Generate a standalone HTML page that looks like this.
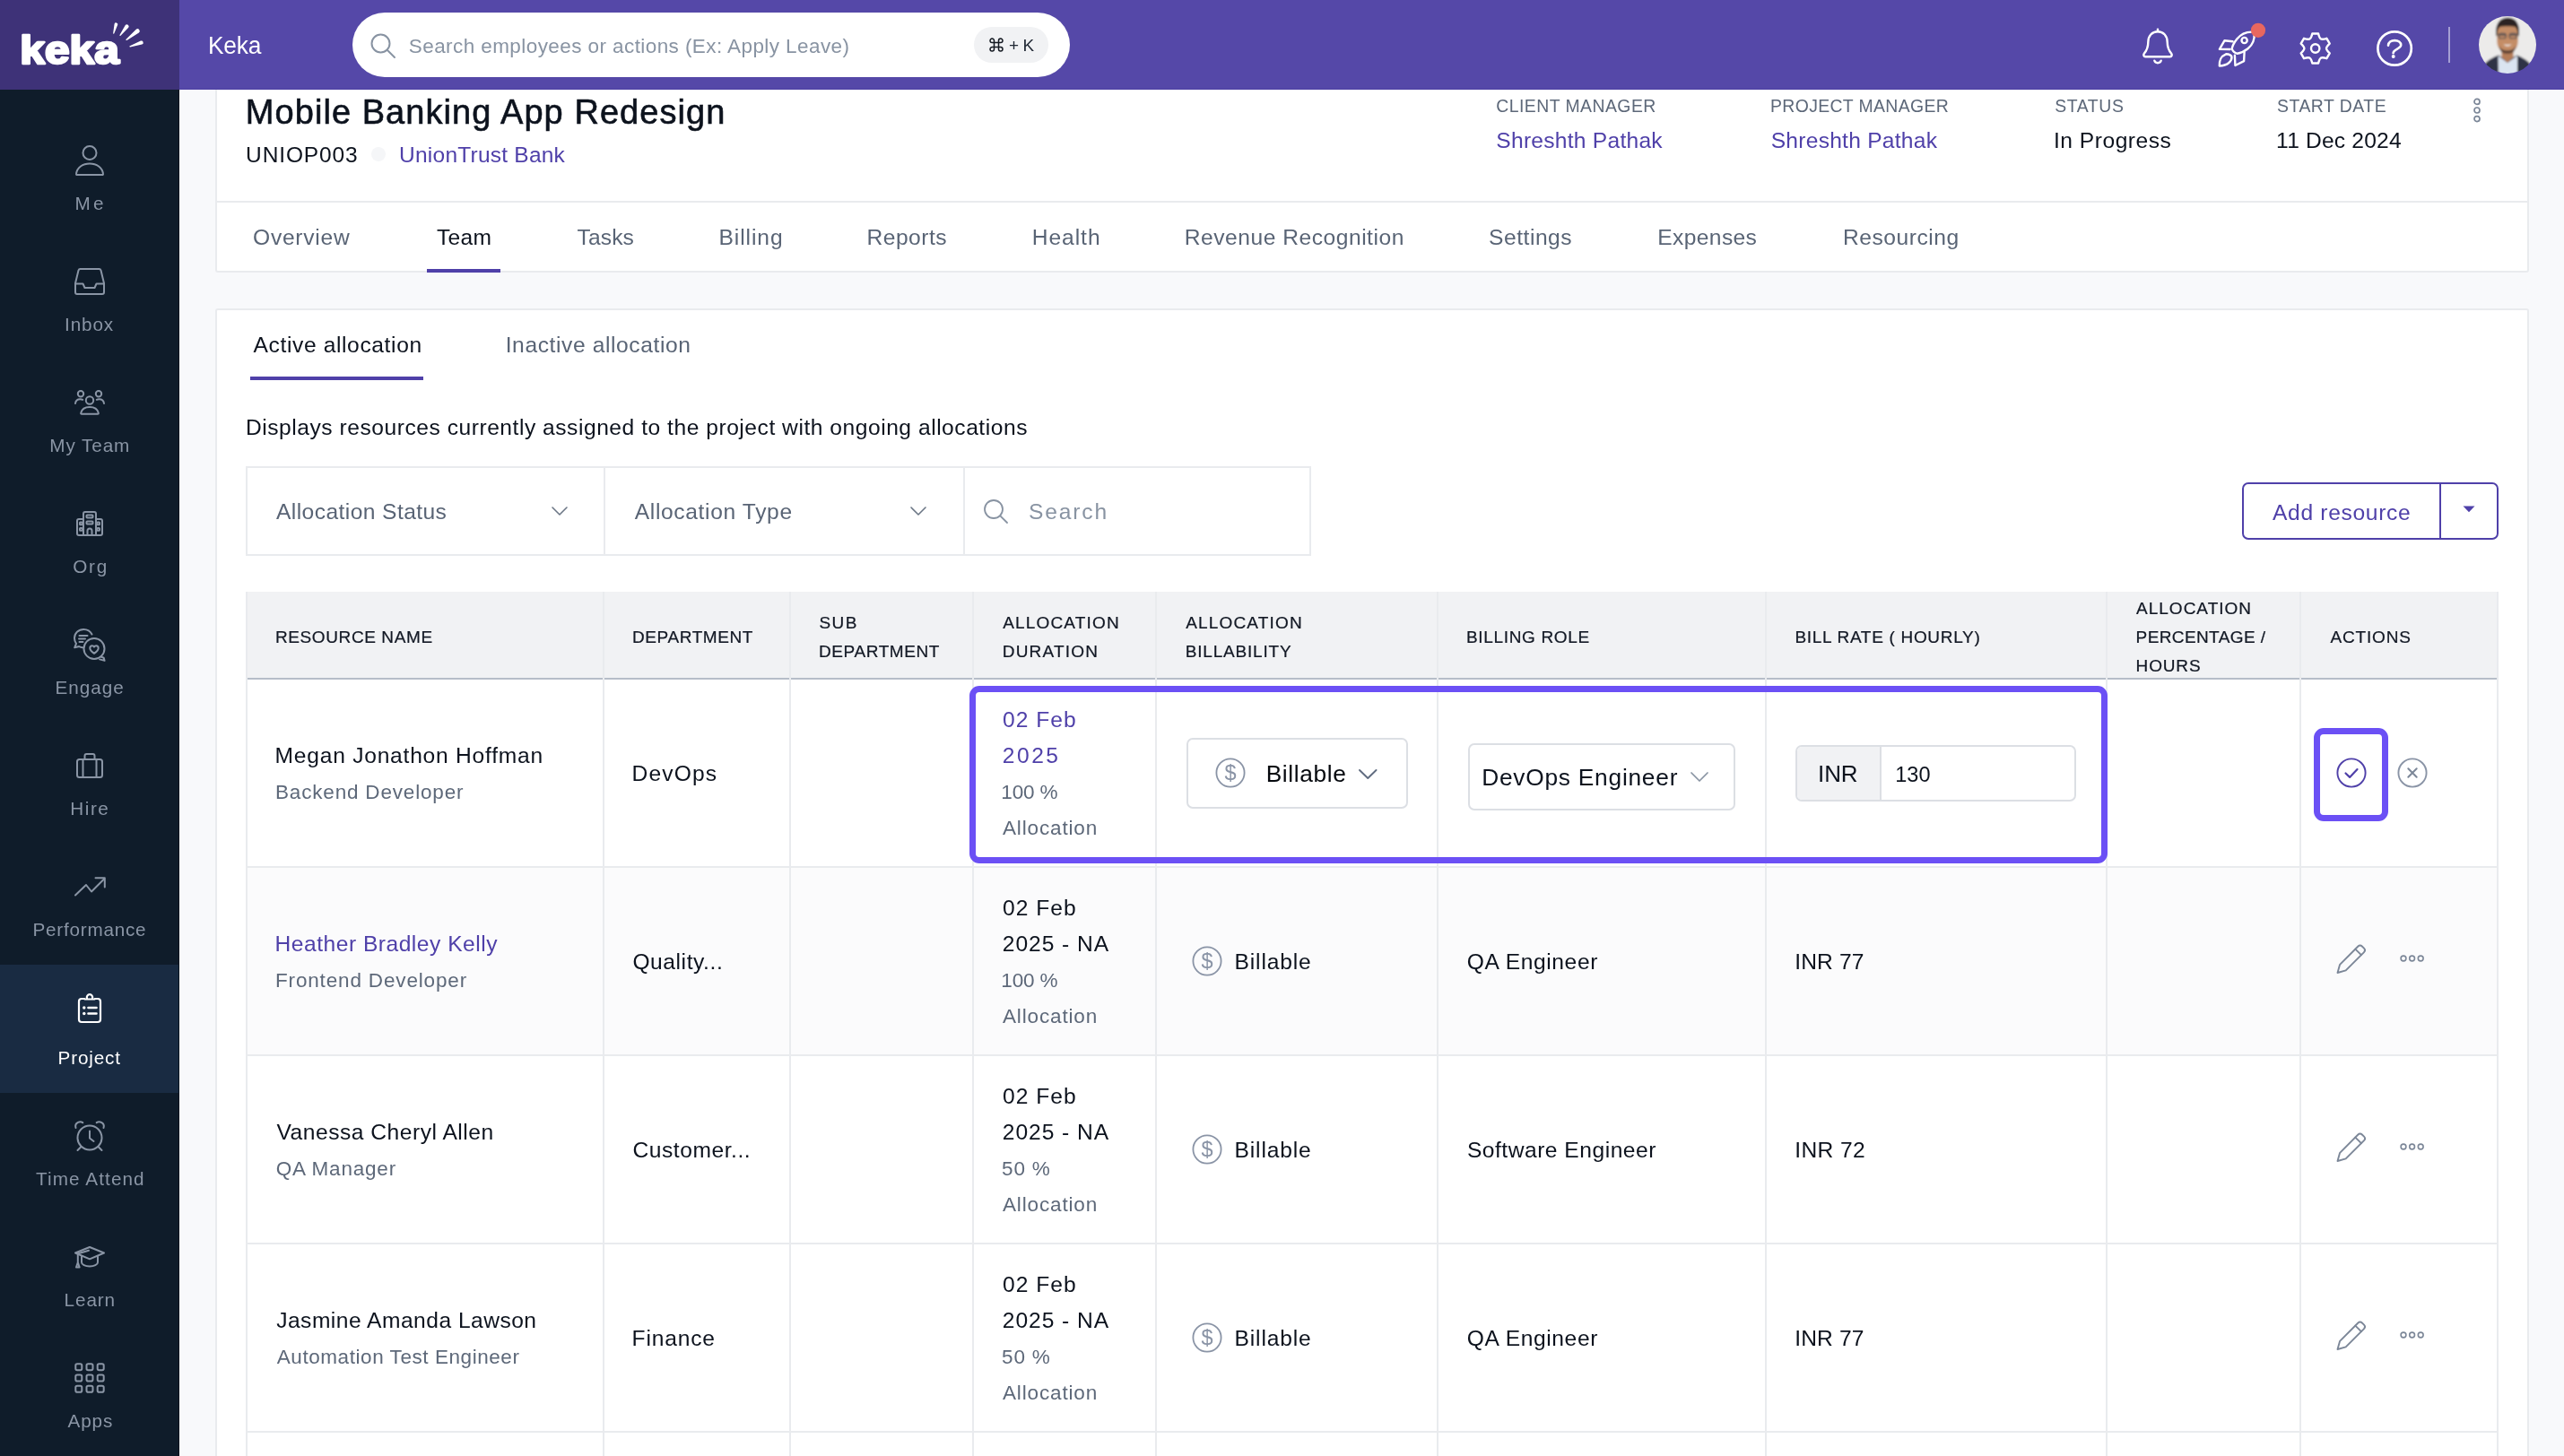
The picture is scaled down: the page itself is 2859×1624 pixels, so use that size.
<!DOCTYPE html>
<html lang="en">
<head>
<meta charset="utf-8">
<title>Keka - Mobile Banking App Redesign - Team</title>
<style>
html,body{margin:0;padding:0;width:2859px;height:1624px;overflow:hidden;font-family:"Liberation Sans",sans-serif;}
body{width:2859px;height:1624px;overflow:hidden;position:relative;background:#f8f9fb;
font-family:"Liberation Sans",sans-serif;}
.t{position:absolute;white-space:nowrap;line-height:1;}
.b{position:absolute;box-sizing:border-box;}
svg{overflow:visible;}
#app{position:absolute;left:0;top:0;width:2859px;height:1624px;overflow:hidden;will-change:transform;}
header,aside,main,section{position:absolute;left:0;top:0;width:0;height:0;}
</style>
</head>
<body>
<div id="app">
<main>
<div class="b" style="left:200px;top:100px;width:2659px;height:1px;background:#fff;"></div>
<div class="b" style="left:200px;top:100px;width:1px;height:1524px;background:#fff;"></div>
<div class="b" style="left:240px;top:60px;width:2580px;height:244px;background:#fff;border:2px solid #e9ebee;border-radius:3px;"></div>
<div class="b" style="left:242px;top:224px;width:2576px;height:2px;background:#e9ebee;"></div>
<div class="t" style="left:273.8px;top:106px;font-size:38px;color:#0c121d;letter-spacing:1.06px;-webkit-text-stroke:0.6px #0c121d;">Mobile Banking App Redesign</div>
<div class="t" style="left:274.1px;top:161px;font-size:24.5px;color:#0c121d;letter-spacing:0.88px;">UNIOP003</div>
<div class="b" style="left:414px;top:164px;width:16px;height:16px;background:#f5f6f8;border-radius:50%;"></div>
<div class="t" style="left:445.1px;top:161px;font-size:24.5px;color:#4f40a9;letter-spacing:0.23px;">UnionTrust Bank</div>
<div class="t" style="left:1668.2px;top:109px;font-size:19.4px;color:#5d6879;letter-spacing:0.47px;">CLIENT MANAGER</div>
<div class="t" style="left:1974.0px;top:109px;font-size:19.4px;color:#5d6879;letter-spacing:0.37px;">PROJECT MANAGER</div>
<div class="t" style="left:2291.3px;top:109px;font-size:19.4px;color:#5d6879;letter-spacing:0.58px;">STATUS</div>
<div class="t" style="left:2539.1px;top:109px;font-size:19.4px;color:#5d6879;letter-spacing:0.49px;">START DATE</div>
<div class="t" style="left:1668.3px;top:145px;font-size:24.6px;color:#4f40a9;letter-spacing:0.25px;">Shreshth Pathak</div>
<div class="t" style="left:1974.7px;top:145px;font-size:24.6px;color:#4f40a9;letter-spacing:0.25px;">Shreshth Pathak</div>
<div class="t" style="left:2289.9px;top:145px;font-size:24.6px;color:#0c121d;letter-spacing:0.52px;">In Progress</div>
<div class="t" style="left:2538.1px;top:145px;font-size:24.6px;color:#0c121d;letter-spacing:0.19px;">11 Dec 2024</div>
<svg class="b" style="left:2757px;top:109px;" width="10" height="28" viewBox="0 0 10 28" ><g fill="none" stroke="#7c8798" stroke-width="1.700"><circle cx="5" cy="4.4" r="3"/><circle cx="5" cy="14.0" r="3"/><circle cx="5" cy="23.6" r="3"/></g></svg>
<div class="t" style="left:282.0px;top:253px;font-size:24.6px;color:#596475;letter-spacing:0.75px;">Overview</div>
<div class="t" style="left:486.9px;top:253px;font-size:24.6px;color:#0c121d;letter-spacing:0.34px;">Team</div>
<div class="t" style="left:643.6px;top:253px;font-size:24.6px;color:#596475;letter-spacing:0.09px;">Tasks</div>
<div class="t" style="left:801.5px;top:253px;font-size:24.6px;color:#596475;letter-spacing:0.91px;">Billing</div>
<div class="t" style="left:966.6px;top:253px;font-size:24.6px;color:#596475;letter-spacing:0.46px;">Reports</div>
<div class="t" style="left:1150.7px;top:253px;font-size:24.6px;color:#596475;letter-spacing:0.96px;">Health</div>
<div class="t" style="left:1320.8px;top:253px;font-size:24.6px;color:#596475;letter-spacing:0.52px;">Revenue Recognition</div>
<div class="t" style="left:1660.1px;top:253px;font-size:24.6px;color:#596475;letter-spacing:0.52px;">Settings</div>
<div class="t" style="left:1848.3px;top:253px;font-size:24.6px;color:#596475;letter-spacing:0.37px;">Expenses</div>
<div class="t" style="left:2055.0px;top:253px;font-size:24.6px;color:#596475;letter-spacing:0.52px;">Resourcing</div>
<div class="b" style="left:475.7px;top:300.3px;width:82px;height:4px;background:#4f40a9;"></div>
<div class="b" style="left:240px;top:344px;width:2580px;height:1300px;background:#fff;border:2px solid #e9ebee;border-radius:3px;"></div>
<div class="t" style="left:282.5px;top:373px;font-size:24.6px;color:#0c121d;letter-spacing:0.62px;">Active allocation</div>
<div class="t" style="left:563.7px;top:373px;font-size:24.6px;color:#596475;letter-spacing:0.60px;">Inactive allocation</div>
<div class="b" style="left:279px;top:420px;width:193px;height:4px;background:#4f40a9;"></div>
<div class="t" style="left:274.0px;top:465px;font-size:24.6px;color:#0c121d;letter-spacing:0.53px;">Displays resources currently assigned to the project with ongoing allocations</div>
<div class="b" style="left:274px;top:520px;width:1188px;height:100px;background:#fff;border:2px solid #e9ebee;"></div>
<div class="b" style="left:673px;top:522px;width:2px;height:96px;background:#e9ebee;"></div>
<div class="b" style="left:1074px;top:522px;width:2px;height:96px;background:#e9ebee;"></div>
<div class="t" style="left:308.0px;top:559px;font-size:24.6px;color:#596475;letter-spacing:0.42px;">Allocation Status</div>
<svg class="b" style="left:613.5px;top:564.0px;" width="20" height="12" viewBox="0 0 20 12" ><path d="M2 2 L10.0 10 L18 2" fill="none" stroke="#6b7685" stroke-width="1.6" stroke-linecap="round" stroke-linejoin="round"/></svg>
<div class="t" style="left:707.8px;top:559px;font-size:24.6px;color:#596475;letter-spacing:0.64px;">Allocation Type</div>
<svg class="b" style="left:1013.5px;top:564.0px;" width="20" height="12" viewBox="0 0 20 12" ><path d="M2 2 L10.0 10 L18 2" fill="none" stroke="#6b7685" stroke-width="1.6" stroke-linecap="round" stroke-linejoin="round"/></svg>
<svg class="b" style="left:1096px;top:556px;" width="30" height="30" viewBox="0 0 30 30" ><circle cx="12" cy="12" r="10" fill="none" stroke="#8893a2" stroke-width="1.800"/><path d="M19.300 19.300 L27 27" stroke="#8893a2" stroke-width="1.800" stroke-linecap="round"/></svg>
<div class="t" style="left:1146.9px;top:559px;font-size:24.6px;color:#8893a2;letter-spacing:1.87px;">Search</div>
<div class="b" style="left:2499.5px;top:538px;width:286px;height:63.5px;background:#fff;border:2px solid #4f40a9;border-radius:7px;"></div>
<div class="b" style="left:2719.5px;top:540px;width:2px;height:60px;background:#4f40a9;"></div>
<div class="t" style="left:2534.0px;top:560px;font-size:24.6px;color:#4f40a9;letter-spacing:0.67px;">Add resource</div>
<svg class="b" style="left:2746px;top:564px;" width="14" height="8" viewBox="0 0 14 8" ><path d="M0.500 0.500 h13 l-6.500 6.800 z" fill="#4f40a9"/></svg>
<div class="b" style="left:274px;top:660px;width:2512px;height:96px;background:#f1f2f4;"></div>
<div class="b" style="left:274px;top:756px;width:2512px;height:2px;background:#b6bdc8;"></div>
<div class="b" style="left:274px;top:968px;width:2512px;height:208px;background:#fbfbfc;"></div>
<div class="b" style="left:274px;top:966px;width:2512px;height:2px;background:#e9ebee;"></div>
<div class="b" style="left:274px;top:1176px;width:2512px;height:2px;background:#e9ebee;"></div>
<div class="b" style="left:274px;top:1386px;width:2512px;height:2px;background:#e9ebee;"></div>
<div class="b" style="left:274px;top:1596px;width:2512px;height:2px;background:#e9ebee;"></div>
<div class="b" style="left:274px;top:660px;width:2px;height:964px;background:#e9ebee;"></div>
<div class="b" style="left:672px;top:660px;width:2px;height:964px;background:#e9ebee;"></div>
<div class="b" style="left:880px;top:660px;width:2px;height:964px;background:#e9ebee;"></div>
<div class="b" style="left:1084px;top:660px;width:2px;height:964px;background:#e9ebee;"></div>
<div class="b" style="left:1288px;top:660px;width:2px;height:964px;background:#e9ebee;"></div>
<div class="b" style="left:1602px;top:660px;width:2px;height:964px;background:#e9ebee;"></div>
<div class="b" style="left:1968px;top:660px;width:2px;height:964px;background:#e9ebee;"></div>
<div class="b" style="left:2348px;top:660px;width:2px;height:964px;background:#e9ebee;"></div>
<div class="b" style="left:2564px;top:660px;width:2px;height:964px;background:#e9ebee;"></div>
<div class="b" style="left:2784px;top:660px;width:2px;height:964px;background:#e9ebee;"></div>
<div class="t" style="left:307.0px;top:701px;font-size:19px;color:#121824;letter-spacing:0.60px;-webkit-text-stroke:0.220px #121824;">RESOURCE NAME</div>
<div class="t" style="left:705.0px;top:701px;font-size:19px;color:#121824;letter-spacing:0.59px;-webkit-text-stroke:0.220px #121824;">DEPARTMENT</div>
<div class="t" style="left:913.6px;top:685px;font-size:19px;color:#121824;letter-spacing:1.35px;-webkit-text-stroke:0.220px #121824;">SUB</div>
<div class="t" style="left:913.0px;top:717px;font-size:19px;color:#121824;letter-spacing:0.59px;-webkit-text-stroke:0.220px #121824;">DEPARTMENT</div>
<div class="t" style="left:1118.3px;top:685px;font-size:19px;color:#121824;letter-spacing:1.15px;-webkit-text-stroke:0.220px #121824;">ALLOCATION</div>
<div class="t" style="left:1117.8px;top:717px;font-size:19px;color:#121824;letter-spacing:1.18px;-webkit-text-stroke:0.220px #121824;">DURATION</div>
<div class="t" style="left:1322.3px;top:685px;font-size:19px;color:#121824;letter-spacing:1.15px;-webkit-text-stroke:0.220px #121824;">ALLOCATION</div>
<div class="t" style="left:1321.7px;top:717px;font-size:19px;color:#121824;letter-spacing:0.81px;-webkit-text-stroke:0.220px #121824;">BILLABILITY</div>
<div class="t" style="left:1634.9px;top:701px;font-size:19px;color:#121824;letter-spacing:0.68px;-webkit-text-stroke:0.220px #121824;">BILLING ROLE</div>
<div class="t" style="left:2001.4px;top:701px;font-size:19px;color:#121824;letter-spacing:0.69px;-webkit-text-stroke:0.220px #121824;">BILL RATE ( HOURLY)</div>
<div class="t" style="left:2382.0px;top:669px;font-size:19px;color:#121824;letter-spacing:1.01px;-webkit-text-stroke:0.220px #121824;">ALLOCATION</div>
<div class="t" style="left:2381.6px;top:701px;font-size:19px;color:#121824;letter-spacing:0.39px;-webkit-text-stroke:0.220px #121824;">PERCENTAGE /</div>
<div class="t" style="left:2381.6px;top:733px;font-size:19px;color:#121824;letter-spacing:0.85px;-webkit-text-stroke:0.220px #121824;">HOURS</div>
<div class="t" style="left:2598.5px;top:701px;font-size:19px;color:#121824;letter-spacing:0.83px;-webkit-text-stroke:0.220px #121824;">ACTIONS</div>
<div class="t" style="left:306.6px;top:831px;font-size:24.6px;color:#0c121d;letter-spacing:0.76px;">Megan Jonathon Hoffman</div>
<div class="t" style="left:307.0px;top:873px;font-size:22.5px;color:#5d6879;letter-spacing:0.82px;">Backend Developer</div>
<div class="t" style="left:704.6px;top:851px;font-size:24.6px;color:#0c121d;letter-spacing:1.11px;">DevOps</div>
<div class="t" style="left:1118.0px;top:791px;font-size:24.6px;color:#4f40a9;letter-spacing:1.00px;">02 Feb</div>
<div class="t" style="left:1117.8px;top:831px;font-size:24.6px;color:#4f40a9;letter-spacing:2.51px;">2025</div>
<div class="t" style="left:1116.3px;top:873px;font-size:22.5px;color:#5d6879;letter-spacing:-0.15px;">100 %</div>
<div class="t" style="left:1118.0px;top:913px;font-size:22.5px;color:#5d6879;letter-spacing:0.85px;">Allocation</div>
<div class="t" style="left:306.6px;top:1041px;font-size:24.6px;color:#4f40a9;letter-spacing:0.50px;">Heather Bradley Kelly</div>
<div class="t" style="left:307.0px;top:1083px;font-size:22.5px;color:#5d6879;letter-spacing:0.84px;">Frontend Developer</div>
<div class="t" style="left:705.4px;top:1061px;font-size:24.6px;color:#0c121d;letter-spacing:0.57px;">Quality...</div>
<div class="t" style="left:1118.0px;top:1001px;font-size:24.6px;color:#0c121d;letter-spacing:1.00px;">02 Feb</div>
<div class="t" style="left:1117.8px;top:1041px;font-size:24.6px;color:#0c121d;letter-spacing:0.94px;">2025 - NA</div>
<div class="t" style="left:1116.3px;top:1083px;font-size:22.5px;color:#5d6879;letter-spacing:-0.15px;">100 %</div>
<div class="t" style="left:1118.0px;top:1123px;font-size:22.5px;color:#5d6879;letter-spacing:0.85px;">Allocation</div>
<svg class="b" style="left:1328.6px;top:1055px;" width="34" height="34" viewBox="0 0 34 34" ><circle cx="17" cy="17" r="15.600" fill="none" stroke="#8a94a6" stroke-width="1.800"/><text x="17" y="25.300" text-anchor="middle" font-family="Liberation Sans" font-size="23.500" fill="#8a94a6">$</text></svg>
<div class="t" style="left:1376.6px;top:1061px;font-size:24.6px;color:#0c121d;letter-spacing:0.83px;">Billable</div>
<div class="t" style="left:1635.8px;top:1061px;font-size:24.6px;color:#0c121d;letter-spacing:0.61px;">QA Engineer</div>
<div class="t" style="left:2001.2px;top:1061px;font-size:24.6px;color:#0c121d;letter-spacing:0.15px;">INR 77</div>
<svg class="b" style="left:2605px;top:1051.5px;" width="35" height="35" viewBox="0 0 35 35" ><g fill="none" stroke="#7c8798" stroke-width="1.900" stroke-linecap="round" stroke-linejoin="round"><path d="M1.500 33 l2.600 -9.200 l20.300 -20.300 c1.300 -1.300 3.100 -1.300 4.400 0 l2.200 2.200 c1.300 1.300 1.300 3.100 0 4.400 l-20.300 20.300 z"/><path d="M21.300 6.600 l6.600 6.600"/></g></svg>
<svg class="b" style="left:2676.4px;top:1065px;" width="28" height="8" viewBox="0 0 28 8" ><g fill="none" stroke="#7c8798" stroke-width="1.600"><circle cx="4.0" cy="4" r="2.900"/><circle cx="13.6" cy="4" r="2.900"/><circle cx="23.2" cy="4" r="2.900"/></g></svg>
<div class="t" style="left:308.5px;top:1251px;font-size:24.6px;color:#0c121d;letter-spacing:0.51px;">Vanessa Cheryl Allen</div>
<div class="t" style="left:307.7px;top:1293px;font-size:22.5px;color:#5d6879;letter-spacing:0.79px;">QA Manager</div>
<div class="t" style="left:705.4px;top:1271px;font-size:24.6px;color:#0c121d;letter-spacing:0.55px;">Customer...</div>
<div class="t" style="left:1118.0px;top:1211px;font-size:24.6px;color:#0c121d;letter-spacing:1.00px;">02 Feb</div>
<div class="t" style="left:1117.8px;top:1251px;font-size:24.6px;color:#0c121d;letter-spacing:0.94px;">2025 - NA</div>
<div class="t" style="left:1117.1px;top:1293px;font-size:22.5px;color:#5d6879;letter-spacing:0.81px;">50 %</div>
<div class="t" style="left:1118.0px;top:1333px;font-size:22.5px;color:#5d6879;letter-spacing:0.85px;">Allocation</div>
<svg class="b" style="left:1328.6px;top:1265px;" width="34" height="34" viewBox="0 0 34 34" ><circle cx="17" cy="17" r="15.600" fill="none" stroke="#8a94a6" stroke-width="1.800"/><text x="17" y="25.300" text-anchor="middle" font-family="Liberation Sans" font-size="23.500" fill="#8a94a6">$</text></svg>
<div class="t" style="left:1376.6px;top:1271px;font-size:24.6px;color:#0c121d;letter-spacing:0.83px;">Billable</div>
<div class="t" style="left:1635.9px;top:1271px;font-size:24.6px;color:#0c121d;letter-spacing:0.51px;">Software Engineer</div>
<div class="t" style="left:2001.2px;top:1271px;font-size:24.6px;color:#0c121d;letter-spacing:0.39px;">INR 72</div>
<svg class="b" style="left:2605px;top:1261.5px;" width="35" height="35" viewBox="0 0 35 35" ><g fill="none" stroke="#7c8798" stroke-width="1.900" stroke-linecap="round" stroke-linejoin="round"><path d="M1.500 33 l2.600 -9.200 l20.300 -20.300 c1.300 -1.300 3.100 -1.300 4.400 0 l2.200 2.200 c1.300 1.300 1.300 3.100 0 4.400 l-20.300 20.300 z"/><path d="M21.300 6.600 l6.600 6.600"/></g></svg>
<svg class="b" style="left:2676.4px;top:1275px;" width="28" height="8" viewBox="0 0 28 8" ><g fill="none" stroke="#7c8798" stroke-width="1.600"><circle cx="4.0" cy="4" r="2.900"/><circle cx="13.6" cy="4" r="2.900"/><circle cx="23.2" cy="4" r="2.900"/></g></svg>
<div class="t" style="left:308.2px;top:1461px;font-size:24.6px;color:#0c121d;letter-spacing:0.48px;">Jasmine Amanda Lawson</div>
<div class="t" style="left:308.8px;top:1503px;font-size:22.5px;color:#5d6879;letter-spacing:0.56px;">Automation Test Engineer</div>
<div class="t" style="left:704.6px;top:1481px;font-size:24.6px;color:#0c121d;letter-spacing:0.82px;">Finance</div>
<div class="t" style="left:1118.0px;top:1421px;font-size:24.6px;color:#0c121d;letter-spacing:1.00px;">02 Feb</div>
<div class="t" style="left:1117.8px;top:1461px;font-size:24.6px;color:#0c121d;letter-spacing:0.94px;">2025 - NA</div>
<div class="t" style="left:1117.1px;top:1503px;font-size:22.5px;color:#5d6879;letter-spacing:0.81px;">50 %</div>
<div class="t" style="left:1118.0px;top:1543px;font-size:22.5px;color:#5d6879;letter-spacing:0.85px;">Allocation</div>
<svg class="b" style="left:1328.6px;top:1475px;" width="34" height="34" viewBox="0 0 34 34" ><circle cx="17" cy="17" r="15.600" fill="none" stroke="#8a94a6" stroke-width="1.800"/><text x="17" y="25.300" text-anchor="middle" font-family="Liberation Sans" font-size="23.500" fill="#8a94a6">$</text></svg>
<div class="t" style="left:1376.6px;top:1481px;font-size:24.6px;color:#0c121d;letter-spacing:0.83px;">Billable</div>
<div class="t" style="left:1635.8px;top:1481px;font-size:24.6px;color:#0c121d;letter-spacing:0.61px;">QA Engineer</div>
<div class="t" style="left:2001.2px;top:1481px;font-size:24.6px;color:#0c121d;letter-spacing:0.15px;">INR 77</div>
<svg class="b" style="left:2605px;top:1471.5px;" width="35" height="35" viewBox="0 0 35 35" ><g fill="none" stroke="#7c8798" stroke-width="1.900" stroke-linecap="round" stroke-linejoin="round"><path d="M1.500 33 l2.600 -9.200 l20.300 -20.300 c1.300 -1.300 3.100 -1.300 4.400 0 l2.200 2.200 c1.300 1.300 1.300 3.100 0 4.400 l-20.300 20.300 z"/><path d="M21.300 6.600 l6.600 6.600"/></g></svg>
<svg class="b" style="left:2676.4px;top:1485px;" width="28" height="8" viewBox="0 0 28 8" ><g fill="none" stroke="#7c8798" stroke-width="1.600"><circle cx="4.0" cy="4" r="2.900"/><circle cx="13.6" cy="4" r="2.900"/><circle cx="23.2" cy="4" r="2.900"/></g></svg>
<div class="b" style="left:1322.5px;top:823px;width:247.5px;height:79px;background:#fff;border:2px solid #dcdfe4;border-radius:7px;"></div>
<svg class="b" style="left:1355px;top:845px;" width="34" height="34" viewBox="0 0 34 34" ><circle cx="17" cy="17" r="15.600" fill="none" stroke="#8a94a6" stroke-width="1.800"/><text x="17" y="25.300" text-anchor="middle" font-family="Liberation Sans" font-size="23.500" fill="#8a94a6">$</text></svg>
<div class="t" style="left:1411.7px;top:850px;font-size:26.3px;color:#05080d;letter-spacing:0.63px;">Billable</div>
<svg class="b" style="left:1514.05px;top:856.5px;" width="22.5" height="13" viewBox="0 0 22.5 13" ><path d="M2 2 L11.25 11 L20.5 2" fill="none" stroke="#606c80" stroke-width="1.9" stroke-linecap="round" stroke-linejoin="round"/></svg>
<div class="b" style="left:1636.5px;top:829px;width:298.5px;height:74.5px;background:#fff;border:2px solid #dcdfe4;border-radius:7px;"></div>
<div class="t" style="left:1652.2px;top:854px;font-size:26.3px;color:#0c121d;letter-spacing:0.76px;">DevOps Engineer</div>
<svg class="b" style="left:1883.5px;top:860.0px;" width="22" height="13" viewBox="0 0 22 13" ><path d="M2 2 L11.0 11 L20 2" fill="none" stroke="#8893a2" stroke-width="1.7" stroke-linecap="round" stroke-linejoin="round"/></svg>
<div class="b" style="left:2002.4px;top:830.5px;width:313px;height:63px;background:#fff;border:2px solid #dcdfe4;border-radius:7px;"></div>
<div class="b" style="left:2004.4px;top:832.5px;width:91.5px;height:59px;background:#f1f2f4;border-radius:5px 0 0 5px;"></div>
<div class="b" style="left:2095.9px;top:832.5px;width:2px;height:59px;background:#dcdfe4;"></div>
<div class="t" style="left:2027.0px;top:850px;font-size:26px;color:#0c121d;letter-spacing:-0.09px;">INR</div>
<div class="t" style="left:2113.2px;top:853px;font-size:23.5px;color:#0c121d;letter-spacing:0.10px;">130</div>
<svg class="b" style="left:2605px;top:845px;" width="34" height="34" viewBox="0 0 34 34" ><circle cx="17" cy="17" r="15.600" fill="none" stroke="#4f40a9" stroke-width="1.900"/><path d="M10.500 17.500 l4.600 4.400 l8.400 -8.800" fill="none" stroke="#4f40a9" stroke-width="2.200" stroke-linecap="round" stroke-linejoin="round"/></svg>
<svg class="b" style="left:2673px;top:845px;" width="34" height="34" viewBox="0 0 34 34" ><circle cx="17" cy="17" r="15.600" fill="none" stroke="#8a94a6" stroke-width="1.900"/><path d="M12.300 12.300 l9.400 9.400 M21.700 12.300 l-9.400 9.400" fill="none" stroke="#7c8798" stroke-width="2" stroke-linecap="round"/></svg>
<div class="b" style="left:1081px;top:764.5px;width:1268.5px;height:198.5px;border:7.500px solid #6b50f5;border-radius:11px;"></div>
<div class="b" style="left:2579.8px;top:811.8px;width:83px;height:104.6px;border:7.500px solid #6b50f5;border-radius:11px;"></div>

</main>
<aside>
<div class="b" style="left:0px;top:100px;width:200px;height:1524px;background:#0f1c2a;"></div>
<div class="b" style="left:0px;top:1076px;width:200px;height:143px;background:#192b42;"></div>
<div class="b" style="left:199px;top:100px;width:1px;height:1524px;background:#07121d;"></div>
<svg class="b" style="left:84px;top:161px;" width="32" height="36" viewBox="0 0 32 36" ><g fill="none" stroke="#8a95a5" stroke-width="2" stroke-linecap="round" stroke-linejoin="round"><circle cx="16" cy="9.500" r="7.500"/><path d="M2 34 c-0.800 0 -1.200 -0.600 -1 -1.500 c1.200 -6.500 7 -11 15 -11 s13.800 4.500 15 11 c0.200 0.900 -0.200 1.500 -1 1.500 z"/></g></svg>
<svg class="b" style="left:83px;top:299px;" width="34" height="30" viewBox="0 0 34 30" ><g fill="none" stroke="#8a95a5" stroke-width="2" stroke-linecap="round" stroke-linejoin="round"><path d="M6.500 1 h21 c1 0 1.700 0.500 2 1.500 l3.500 14.500 v10 c0 1.200 -0.800 2 -2 2 h-28 c-1.200 0 -2 -0.800 -2 -2 v-10 l3.500 -14.500 c0.300 -1 1 -1.500 2 -1.500 z"/><path d="M1 17.500 h8.500 l2 4.500 h11 l2 -4.500 h8.500"/></g></svg>
<svg class="b" style="left:83px;top:435px;" width="34" height="28" viewBox="0 0 34 28" ><g fill="none" stroke="#8a95a5" stroke-width="2" stroke-linecap="round" stroke-linejoin="round" stroke-width="1.800"><circle cx="17" cy="11.500" r="4.200"/><path d="M8 26.800 c-0.700 0 -1 -0.500 -0.800 -1.200 c1 -4 4.800 -6.600 9.800 -6.600 s8.800 2.600 9.800 6.600 c0.200 0.700 -0.100 1.200 -0.800 1.200 z"/><circle cx="7" cy="4.200" r="3.200"/><circle cx="27" cy="4.200" r="3.200"/><path d="M1 15 c0.300 -3 2.500 -4.800 5.500 -4.800 c1 0 1.900 0.200 2.700 0.600"/><path d="M33 15 c-0.300 -3 -2.500 -4.800 -5.500 -4.800 c-1 0 -1.900 0.200 -2.700 0.600"/></g></svg>
<svg class="b" style="left:85px;top:570px;" width="30" height="28" viewBox="0 0 30 28" ><g fill="none" stroke="#8a95a5" stroke-width="2" stroke-linecap="round" stroke-linejoin="round" stroke-width="1.700"><path d="M8 27 v-24 c0 -1.200 0.800 -2 2 -2 h10 c1.200 0 2 0.800 2 2 v24"/><path d="M8 9 h-5 c-1.200 0 -2 0.800 -2 2 v14 c0 1.200 0.800 2 2 2 h24 c1.200 0 2 -0.800 2 -2 v-14 c0 -1.200 -0.800 -2 -2 -2 h-5"/><rect x="11.500" y="4.500" width="7" height="3" rx="0.800"/><rect x="11.500" y="11.500" width="7" height="3" rx="0.800"/><rect x="4" y="12.500" width="2.800" height="2.800" rx="0.600"/><rect x="4" y="19" width="2.800" height="2.800" rx="0.600"/><rect x="23.200" y="12.500" width="2.800" height="2.800" rx="0.600"/><rect x="23.200" y="19" width="2.800" height="2.800" rx="0.600"/><path d="M12.500 27 v-5 a2.500 2.500 0 0 1 5 0 v5"/></g></svg>
<svg class="b" style="left:82px;top:701px;" width="36" height="36" viewBox="0 0 36 36" ><g fill="none" stroke="#8a95a5" stroke-width="2" stroke-linecap="round" stroke-linejoin="round" stroke-width="1.700"><path d="M20.500 6.500 c-1.800 -3.500 -5.200 -5.500 -9.200 -5.500 c-5.800 0 -10.300 4.300 -10.300 9.800 c0 2.300 0.800 4.300 2 6 l-1.800 4.500 l5 -1.300 c1.200 0.700 2.600 1.100 4 1.300"/><path d="M6.500 8 h9 M6 11.500 h7 M6.500 15 h4"/><circle cx="23" cy="22.500" r="11.500"/><path d="M30.500 31.500 l3.200 1.200 l0.900 3.200 l-5.500 -1.500"/><path d="M23 27.800 c-3 -2 -4.700 -3.800 -4.700 -5.800 c0 -1.600 1.200 -2.700 2.500 -2.700 c1 0 1.800 0.500 2.200 1.400 c0.400 -0.900 1.200 -1.400 2.200 -1.400 c1.300 0 2.500 1.100 2.500 2.700 c0 2 -1.700 3.800 -4.700 5.800 z"/></g></svg>
<svg class="b" style="left:85px;top:840px;" width="30" height="28" viewBox="0 0 30 28" ><g fill="none" stroke="#8a95a5" stroke-width="2" stroke-linecap="round" stroke-linejoin="round"><rect x="1" y="7" width="28" height="20" rx="2.500"/><path d="M9.500 7 v-4 c0 -1.200 0.800 -2 2 -2 h7 c1.200 0 2 0.800 2 2 v4"/><path d="M7.500 7 v20 M22.500 7 v20"/></g></svg>
<svg class="b" style="left:83px;top:978px;" width="35" height="22" viewBox="0 0 35 22" ><g fill="none" stroke="#8a95a5" stroke-width="2" stroke-linecap="round" stroke-linejoin="round"><path d="M1 20.500 l12 -11.500 l6 7.500 l14 -14"/><path d="M23.500 1.200 h10.300 v10.300"/></g></svg>
<svg class="b" style="left:87px;top:1107px;" width="26" height="34" viewBox="0 0 26 34" ><g fill="none" stroke="#fff" stroke-width="2.2" stroke-linecap="round" stroke-linejoin="round"><path d="M7 7 h-3 c-1.700 0 -3 1.300 -3 3 v20 c0 1.700 1.300 3 3 3 h18 c1.700 0 3 -1.300 3 -3 v-20 c0 -1.700 -1.300 -3 -3 -3 h-3"/><path d="M7.500 7.500 h11"/><path d="M10 6.500 a3.200 3.200 0 1 1 6 0"/><path d="M11.500 17 h9 M11.500 23.500 h9" stroke-width="2.600"/></g><circle cx="6.800" cy="17" r="1.700" fill="#fff"/><circle cx="6.800" cy="23.500" r="1.700" fill="#fff"/></svg>
<svg class="b" style="left:83px;top:1250px;" width="34" height="34" viewBox="0 0 34 34" ><g fill="none" stroke="#8a95a5" stroke-width="2" stroke-linecap="round" stroke-linejoin="round"><circle cx="17" cy="19" r="13.500"/><path d="M17 11.500 v8 l4.500 3.500"/><path d="M1.500 8 c-0.800 -2.500 0.200 -5 2.500 -6.200 c1.800 -0.900 3.800 -0.700 5.300 0.300"/><path d="M32.500 8 c0.800 -2.500 -0.200 -5 -2.500 -6.200 c-1.800 -0.900 -3.800 -0.700 -5.300 0.300"/><path d="M7.500 29 l-4 4 M26.500 29 l4 4"/></g></svg>
<svg class="b" style="left:83px;top:1390px;" width="34" height="25" viewBox="0 0 34 25" ><g fill="none" stroke="#8a95a5" stroke-width="2" stroke-linecap="round" stroke-linejoin="round" stroke-width="1.800"><path d="M17 1 l16 6.500 l-16 6.800 l-16 -6.800 z"/><path d="M8 11 v7 c0 2.500 4 4.500 9 4.500 s9 -2 9 -4.500 v-7"/><path d="M3.800 8.500 v9.500 l-1.800 5.500 h3.600 l-1.800 -5.500"/><path d="M4 8.200 l12 -3.500"/></g></svg>
<svg class="b" style="left:83px;top:1520px;" width="34" height="34" viewBox="0 0 34 34" ><g fill="none" stroke="#8a95a5" stroke-width="2" stroke-linecap="round" stroke-linejoin="round" stroke-width="2.400"><rect x="1.3" y="1.3" width="7" height="7" rx="1.800"/><rect x="13.5" y="1.3" width="7" height="7" rx="1.800"/><rect x="25.7" y="1.3" width="7" height="7" rx="1.800"/><rect x="1.3" y="13.5" width="7" height="7" rx="1.800"/><rect x="13.5" y="13.5" width="7" height="7" rx="1.800"/><rect x="25.7" y="13.5" width="7" height="7" rx="1.800"/><rect x="1.3" y="25.7" width="7" height="7" rx="1.800"/><rect x="13.5" y="25.7" width="7" height="7" rx="1.800"/><rect x="25.7" y="25.7" width="7" height="7" rx="1.800"/></g></svg>
<div class="t" style="left:83.6px;top:217px;font-size:20.7px;color:#8a95a5;letter-spacing:3.26px;">Me</div>
<div class="t" style="left:72.1px;top:352px;font-size:20.7px;color:#8a95a5;letter-spacing:0.87px;">Inbox</div>
<div class="t" style="left:55.3px;top:487px;font-size:20.7px;color:#8a95a5;letter-spacing:0.91px;">My Team</div>
<div class="t" style="left:81.2px;top:622px;font-size:20.7px;color:#8a95a5;letter-spacing:1.75px;">Org</div>
<div class="t" style="left:61.5px;top:757px;font-size:20.7px;color:#8a95a5;letter-spacing:0.97px;">Engage</div>
<div class="t" style="left:78.3px;top:892px;font-size:20.7px;color:#8a95a5;letter-spacing:1.55px;">Hire</div>
<div class="t" style="left:36.5px;top:1027px;font-size:20.7px;color:#8a95a5;letter-spacing:0.77px;">Performance</div>
<div class="t" style="left:64.6px;top:1170px;font-size:20.7px;color:#fff;letter-spacing:0.82px;">Project</div>
<div class="t" style="left:40.1px;top:1305px;font-size:20.7px;color:#8a95a5;letter-spacing:1.09px;">Time Attend</div>
<div class="t" style="left:71.6px;top:1440px;font-size:20.7px;color:#8a95a5;letter-spacing:0.90px;">Learn</div>
<div class="t" style="left:75.4px;top:1575px;font-size:20.7px;color:#8a95a5;letter-spacing:0.94px;">Apps</div>

</aside>
<header>
<div class="b" style="left:0px;top:0px;width:2859px;height:100px;background:#5548a8;"></div>
<div class="b" style="left:200px;top:99px;width:2659px;height:1px;background:#4b3ea2;"></div>
<div class="b" style="left:0px;top:0px;width:200px;height:100px;background:#3e3278;"></div>
<svg class="b" style="left:0px;top:0px;" width="200" height="100" viewBox="0 0 200 100" ><text x="22.300" y="71" font-family="Liberation Sans" font-weight="700" font-size="44" fill="#fff" stroke="#fff" stroke-width="2.600" stroke-linejoin="round" textLength="110.500" lengthAdjust="spacingAndGlyphs">keka</text><path d="M127.33 37.37 L131.25 27.62 A1.90 1.90 0 0 0 127.58 26.65 L126.17 37.07 A0.60 0.60 0 0 0 127.33 37.37 Z" fill="#fff"/><path d="M134.51 39.68 L143.23 30.85 A2.25 2.25 0 0 0 139.65 28.13 L133.48 38.89 A0.65 0.65 0 0 0 134.51 39.68 Z" fill="#fff"/><path d="M141.48 44.92 L154.89 36.61 A2.50 2.50 0 0 0 151.79 32.69 L140.62 43.82 A0.70 0.70 0 0 0 141.48 44.92 Z" fill="#fff"/><path d="M145.23 52.50 L158.29 49.57 A2.10 2.10 0 0 0 156.93 45.59 L144.80 51.27 A0.65 0.65 0 0 0 145.23 52.50 Z" fill="#fff"/></svg>
<div class="t" style="left:231.7px;top:38px;font-size:26.8px;color:#fff;letter-spacing:-0.20px;transform:scaleX(0.9813);transform-origin:0 0;">Keka</div>
<div class="b" style="left:393px;top:14px;width:800px;height:72px;background:#fff;border-radius:36px;"></div>
<svg class="b" style="left:410px;top:34px;" width="34" height="34" viewBox="0 0 34 34" ><circle cx="14.500" cy="14.500" r="10" fill="none" stroke="#8893a2" stroke-width="2"/><path d="M22 22 L30 30" stroke="#8893a2" stroke-width="2" stroke-linecap="round"/></svg>
<div class="t" style="left:455.8px;top:41px;font-size:22.5px;color:#8893a2;letter-spacing:0.42px;">Search employees or actions (Ex: Apply Leave)</div>
<div class="b" style="left:1086px;top:30px;width:83px;height:40px;background:#f1f2f4;border-radius:20px;"></div>
<svg class="b" style="left:1102.5px;top:41.5px;" width="16" height="16" viewBox="0 0 16 16" ><path d="M5.500 5.500 H10.500 V10.500 H5.500 Z M5.500 5.500 V3.250 A2.250 2.250 0 1 0 3.250 5.500 H5.500 M10.500 5.500 H12.750 A2.250 2.250 0 1 0 10.500 3.250 V5.500 M10.500 10.500 V12.750 A2.250 2.250 0 1 0 12.750 10.500 H10.500 M5.500 10.500 H3.250 A2.250 2.250 0 1 0 5.500 12.750 V10.500" fill="none" stroke="#151a22" stroke-width="1.500" stroke-linejoin="round"/></svg>
<div class="t" style="left:1125.1px;top:42px;font-size:18.9px;color:#1f2733;letter-spacing:-0.38px;">+ K</div>
<svg class="b" style="left:0px;top:0px;" width="2859" height="100" viewBox="0 0 2859 100" ><g fill="none" stroke="#fff" stroke-width="2.400" stroke-linecap="round" stroke-linejoin="round"><path d="M2406 32.600 V35"/><path d="M2406 35.200 C2399.600 35.200 2395.300 40 2395.300 47 C2395.300 53.500 2393.600 56.500 2390.800 59.800 C2389.700 61.200 2390.400 63.200 2392.200 63.200 H2419.800 C2421.600 63.200 2422.300 61.200 2421.200 59.800 C2418.400 56.500 2416.700 53.500 2416.700 47 C2416.700 40 2412.400 35.200 2406 35.200 Z"/><path d="M2402.300 67.700 A3.900 3.700 0 0 0 2409.700 67.700"/><path d="M2512.600 35.700 C2505.500 35.200 2498.500 38.200 2494.300 43.600 C2491.300 47.400 2489.300 51.500 2488.700 54.300 C2489.500 56.500 2492 59 2494.800 59.800 C2498.300 59.200 2502.500 57.300 2506.500 54.200 C2511.800 50 2514.300 43.500 2513.500 36.500 C2513.450 36 2513.100 35.750 2512.600 35.700 Z"/><circle cx="2502.600" cy="45" r="3.100"/><path d="M2489.600 46.300 L2480.400 45.300 L2474.900 54.900 L2486.600 55"/><path d="M2491.900 61.800 L2492.400 73 L2502.100 68.100 L2502.600 58"/><path d="M2474.800 73.500 C2474.600 67 2476 63 2482.100 60.300 C2486 60.300 2488.500 62 2488.500 63.800 C2488.500 68.500 2484 73 2474.800 73.500 Z"/><path d="M2575.55 43.35 Q2577.22 42.33 2578.33 37.44 L2585.07 37.44 Q2586.18 42.33 2587.85 43.35 Q2589.57 44.29 2594.36 42.80 L2597.73 48.64 Q2594.05 52.04 2594.00 54.00 Q2594.05 55.96 2597.73 59.36 L2594.36 65.20 Q2589.57 63.71 2587.85 64.65 Q2586.18 65.67 2585.07 70.56 L2578.33 70.56 Q2577.22 65.67 2575.55 64.65 Q2573.83 63.71 2569.04 65.20 L2565.67 59.36 Q2569.35 55.96 2569.40 54.00 Q2569.35 52.04 2565.67 48.64 L2569.04 42.80 Q2573.83 44.29 2575.55 43.35 Z"/><circle cx="2581.700" cy="54" r="4.700"/><circle cx="2670.100" cy="54" r="18.700" stroke-width="2.700"/><path d="M2663 50.600 C2663.200 47.300 2666.200 45.100 2670.200 45.100 C2674.300 45.100 2677.200 47.300 2677.200 50.300 C2677.200 54.300 2668.600 54.800 2668.600 59.200" stroke-width="2.600"/></g><circle cx="2668.700" cy="63.100" r="2" fill="#fff"/><circle cx="2518" cy="33.800" r="8.100" fill="#e8675f"/></svg>
<div class="b" style="left:2730px;top:30px;width:2px;height:40px;background:#a59fd3;"></div>
<svg class="b" style="left:2764px;top:18px;" width="64" height="64" viewBox="0 0 64 64" ><defs><clipPath id="avc"><circle cx="32" cy="32" r="32"/></clipPath><filter id="avb" x="-10%" y="-10%" width="120%" height="120%"><feGaussianBlur stdDeviation="0.9"/></filter></defs><g clip-path="url(#avc)"><g filter="url(#avb)"><rect x="-4" y="-4" width="72" height="72" fill="#ecebea"/><path d="M2 64 C6 50 12 48 22 43.500 L32 50 L42.500 43.500 C52 48 58 50 62 64 Z" fill="#2f3345"/><path d="M21.500 44 L22 68 H43 L43 44 L32 52 Z" fill="#dbe4f1"/><path d="M25.500 38 h13 v8 l-6.500 6 l-6.500 -6 z" fill="#b57d58"/><path d="M20.300 15 Q20.300 9 26 9 H38 Q43.700 9 43.700 15 V28 C43.700 36 38 41.200 32 41.200 C26 41.200 20.300 36 20.300 28 Z" fill="#c48d66"/><path d="M22.500 33 C24 41.500 28 41.800 32 41.800 C36 41.800 40 41.500 41.500 33 C39 37.500 36 38.300 32 38.300 C28 38.300 25 37.500 22.500 33 Z" fill="#5e4334"/><path d="M19.300 22.500 C17.800 6 25.500 1.800 32.300 1.800 C39.500 1.800 46.500 6 44.900 22.500 L43.400 21 C43.400 15 42 12 38.500 11.500 C35 11 29 11 25.500 11.500 C22 12 20.600 15 20.600 21 Z" fill="#2a2320"/><path d="M21.500 21 h9 M34 21 h9" stroke="#4a4a50" stroke-width="1.400"/><rect x="22.200" y="19.300" width="8" height="5.400" rx="2" fill="none" stroke="#4a4a50" stroke-width="1.100"/><rect x="34.200" y="19.300" width="8" height="5.400" rx="2" fill="none" stroke="#4a4a50" stroke-width="1.100"/><path d="M27.200 31.200 Q32 36 37 31.200 Q32 32.600 27.200 31.200 Z" fill="#f4efec"/></g></g></svg>

</header>
</div>
</body>
</html>
